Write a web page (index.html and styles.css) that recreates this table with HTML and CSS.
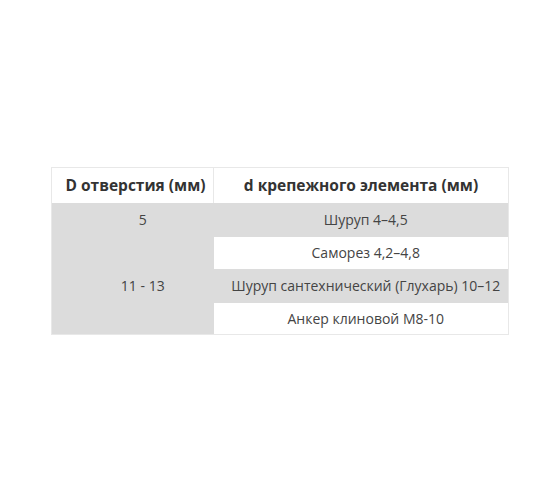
FILE: index.html
```html
<!DOCTYPE html>
<html lang="ru">
<head>
<meta charset="utf-8">
<link rel="stylesheet" href="styles.css">
</head>
<body>
<div class="page">
  <table class="spec">
    <thead>
      <tr class="head">
        <th class="c1">D отверстия (мм)</th>
        <th class="c2">d крепежного элемента (мм)</th>
      </tr>
    </thead>
    <tbody>
      <tr class="r1">
        <td class="grey k">5</td>
        <td class="grey v">Шуруп 4–4,5</td>
      </tr>
      <tr class="r2">
        <td class="grey k" rowspan="3">11 - 13</td>
        <td class="white v">Саморез 4,2–4,8</td>
      </tr>
      <tr class="r3">
        <td class="grey v">Шуруп сантехнический (Глухарь) 10–12</td>
      </tr>
      <tr class="r4">
        <td class="white v">Анкер клиновой М8-10</td>
      </tr>
    </tbody>
  </table>
</div>
</body>
</html>
```

FILE: styles.css
```css
html, body {
  margin: 0;
  padding: 0;
  background: #ffffff;
}
.page {
  width: 560px;
  height: 504px;
  padding-top: 167px;
  padding-left: 51px;
  box-sizing: border-box;
}
.spec {
  border-collapse: collapse;
  width: 458px;
  font-family: "Open Sans", "Liberation Sans", sans-serif;
  table-layout: fixed;
  border: 1px solid #e8e8e8;
}
.spec th, .spec td {
  border: none;
  text-align: center;
  padding: 0;
  box-sizing: border-box;
}
.spec th {
  font-weight: 700;
  font-size: 15.5px;
  color: #333333;
  height: 35px;
  background: #ffffff;
}
.spec th.c1 { border-right: 1px solid #e8e8e8; padding-left: 6px; width: 162px; }
.spec td {
  font-size: 14px;
  color: #444444;
}
.spec td.k { padding-left: 20px; }
.spec td.v { padding-left: 10px; }
.grey { background: #dcdcdc; }
.white { background: #ffffff; }
.r1 td { height: 34px; }
.r2 td { height: 32px; }
.r3 td { height: 34px; }
.r4 td { height: 32px; }
```
